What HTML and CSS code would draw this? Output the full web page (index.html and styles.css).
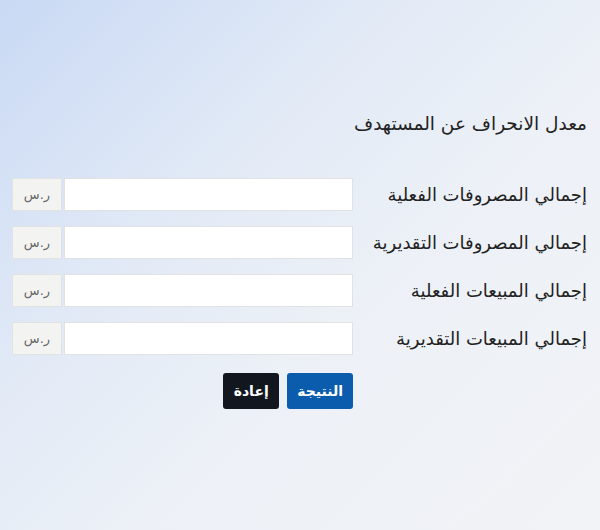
FILE: index.html
```html
<!DOCTYPE html>
<html lang="ar" dir="rtl">
<head>
  <meta charset="UTF-8">
  <meta name="viewport" content="width=device-width, initial-scale=1.0">
  <title>معدل الانحراف عن المستهدف</title>
  <link rel="stylesheet" href="styles.css">
</head>
<body>
  <div class="page">
    <h2 class="title">معدل الانحراف عن المستهدف</h2>

    <form id="deviationForm" class="calc">
      <div class="row">
        <label for="actualExp">إجمالي المصروفات الفعلية</label>
        <div class="group">
          <input type="number" id="actualExp">
          <span class="addon">ر.س</span>
        </div>
      </div>
      <div class="row">
        <label for="plannedExp">إجمالي المصروفات التقديرية</label>
        <div class="group">
          <input type="number" id="plannedExp">
          <span class="addon">ر.س</span>
        </div>
      </div>
      <div class="row">
        <label for="actualSales">إجمالي المبيعات الفعلية</label>
        <div class="group">
          <input type="number" id="actualSales">
          <span class="addon">ر.س</span>
        </div>
      </div>
      <div class="row">
        <label for="plannedSales">إجمالي المبيعات التقديرية</label>
        <div class="group">
          <input type="number" id="plannedSales">
          <span class="addon">ر.س</span>
        </div>
      </div>

      <div class="actions">
        <button type="submit" class="btn btn-primary">النتيجة</button>
        <button type="reset" class="btn btn-dark">إعادة</button>
      </div>
    </form>
  </div>
</body>
</html>
```

FILE: styles.css
```css
html, body {
  height: 100%;
}
body {
  margin: 0;
  font-family: "DejaVu Sans", sans-serif;
  color: #222;
  background: linear-gradient(135deg, #c9d9f4 0%, #e2eaf6 35%, #edf1f7 60%, #f1f3f6 100%);
}
.page {
  padding: 110px 13px 0 12px;
}
.title {
  margin: 0 0 40px;
  font-size: 18.5px;
  font-weight: normal;
  line-height: 28px;
}
.calc {
  display: grid;
  gap: 15px;
}
.row {
  display: grid;
  grid-template-columns: 234px 1fr;
  align-items: center;
}
.row label {
  font-size: 18px;
  line-height: 24px;
}
.group {
  display: flex;
  height: 33px;
}
.group input {
  flex: 1;
  border: 1px solid #e2e2e2;
  background: #fff;
  padding: 0 8px;
  font: inherit;
}
.addon {
  width: 48px;
  display: flex;
  align-items: center;
  justify-content: center;
  margin-right: 2px;
  background: #f3f3f2;
  border: 1px solid #e2e2e2;
  color: #666;
  font-size: 13px;
}
.actions {
  display: flex;
  gap: 8px;
  margin-right: 234px;
  margin-top: 3px;
}
.btn {
  height: 36px;
  padding: 0 10px;
  border: none;
  border-radius: 3px;
  font: inherit;
  font-size: 14px;
  font-weight: bold;
  color: #fff;
  cursor: pointer;
}
.btn-primary {
  background: #0b5cad;
  min-width: 65px;
}
.btn-dark {
  background: #12161f;
  min-width: 56px;
}
```
